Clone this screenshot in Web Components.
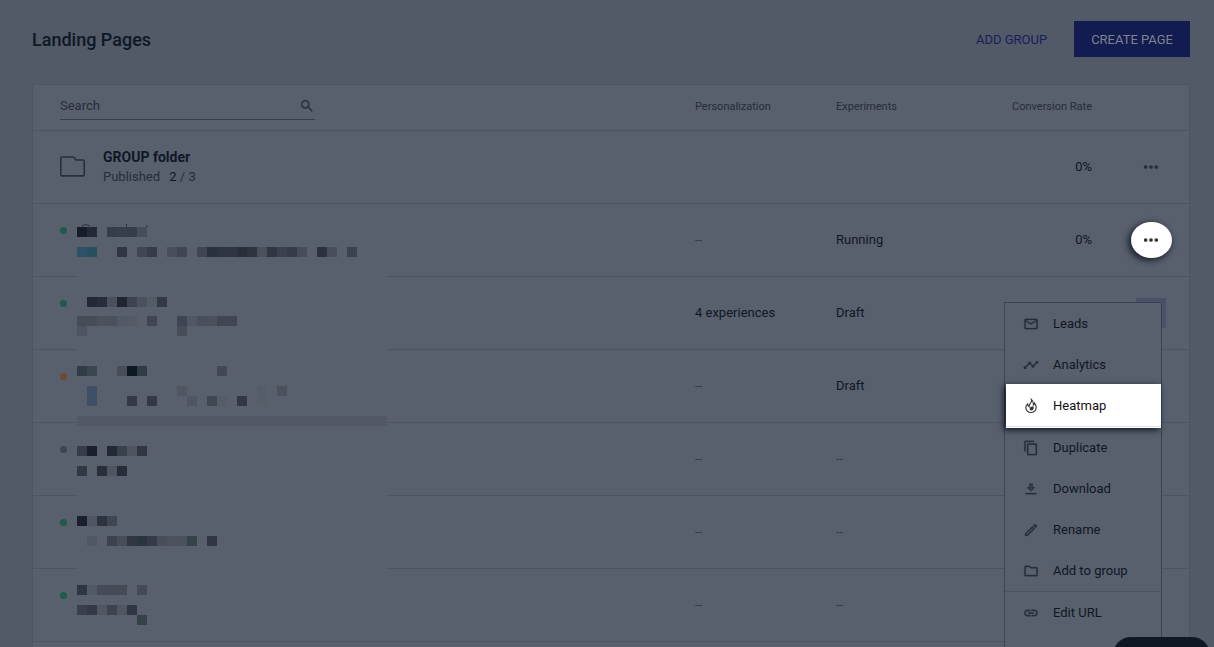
<!DOCTYPE html>
<html lang="en">
<head>
<meta charset="utf-8">
<title>Landing Pages</title>
<style>
  html { --page:#525967; --card:#585f6d; --line:#4d5463; --ink:#0e1825; --muted:#252e3b; --icon:#272f3c; }
  body { margin:0; background:var(--page); font-family:Roboto, "Liberation Sans", sans-serif; color:var(--ink); }
</style>
</head>
<body>
<lp-page></lp-page>
<script>
const ICONS = {
  search: '<path d="M15.5 14h-.79l-.28-.27A6.47 6.47 0 0 0 16 9.5 6.5 6.5 0 1 0 9.5 16c1.61 0 3.09-.59 4.23-1.57l.27.28v.79l5 4.99L20.49 19l-4.99-5zm-6 0C7.01 14 5 11.99 5 9.5S7.01 5 9.5 5 14 7.01 14 9.5 11.99 14 9.5 14z" stroke="currentColor" stroke-width=".6"/>',
  dots: '<circle cx="4" cy="12" r="2.800"/><circle cx="12" cy="12" r="2.800"/><circle cx="20" cy="12" r="2.800"/>',
  group: '<path d="M1.900 2.900h10.600a1.500 1.500 0 0 1 1.100.5l1.800 2.400h6.700a1.100 1.100 0 0 1 1.100 1.100v13a1.100 1.100 0 0 1-1.100 1.100H1.900a1.100 1.100 0 0 1-1.100-1.100V4a1.100 1.100 0 0 1 1.100-1.100z" fill="none" stroke="currentColor" stroke-width="1.500"/>',
  leads: '<path d="M22 6c0-1.100-.9-2-2-2H4c-1.100 0-2 .9-2 2v12c0 1.100.9 2 2 2h16c1.100 0 2-.9 2-2V6zm-2 0-8 5-8-5h16zm0 12H4V8l8 5 8-5v10z" stroke="currentColor" stroke-width=".4"/>',
  analytics: '<path d="M23 8c0 1.100-.9 2-2 2-.18 0-.35-.02-.51-.07l-3.560 3.550c.05.16.07.34.07.52 0 1.100-.9 2-2 2s-2-.9-2-2c0-.18.02-.36.07-.52l-2.550-2.550c-.16.05-.34.07-.52.07s-.36-.02-.52-.07l-4.550 4.560c.05.16.07.33.07.51 0 1.100-.9 2-2 2s-2-.9-2-2 .9-2 2-2c.18 0 .35.02.51.07l4.560-4.550C8.020 9.360 8 9.180 8 9c0-1.100.9-2 2-2s2 .9 2 2c0 .18-.02.36-.07.52l2.550 2.550c.16-.05.34-.07.52-.07s.36.02.52.07l3.550-3.560C19.020 8.350 19 8.180 19 8c0-1.100.9-2 2-2s2 .9 2 2z" stroke="currentColor" stroke-width=".4"/>',
  heatmap: '<path d="M12.600 2.200c.8 3-.4 4.700-2 6.600C9.300 10.400 8.900 11.800 9.300 13.300 7.700 12.500 6.900 10.900 6.900 8.900 5 10.600 4.200 12.400 4.200 14.300A7.800 7.600 0 0 0 12 21.800a7.800 7.600 0 0 0 7.800-7.500c0-2.600-.9-4.800-2.500-6.600-.2 1.500-.8 2.400-1.700 2.800C15.800 7.500 15 4.200 12.600 2.200z" fill="none" stroke="currentColor" stroke-width="1.700"/><path d="M15.800 12.200c-3 .2-5.900 1.500-5.900 4 0 1.500 1.100 2.500 2.500 2.500 3.100 0 4.200-3 3.400-6.500z"/>',
  duplicate: '<path d="M16 1H4c-1.100 0-2 .9-2 2v14h2V3h12V1zm3 4H8c-1.100 0-2 .9-2 2v14c0 1.100.9 2 2 2h11c1.100 0 2-.9 2-2V7c0-1.100-.9-2-2-2zm0 16H8V7h11v14z" stroke="currentColor" stroke-width=".4"/>',
  download: '<path d="M18 9.500h-3.500V4h-5v5.500H6l6 6 6-6zm-6.700 1.800V6h1.400v5.300h1.300L12 13.300l-2-2zM4 18h16v2H4z" stroke="currentColor" stroke-width=".4"/>',
  rename: '<path d="M14.060 9.020l.92.92L5.920 19H5v-.92l9.060-9.060M17.660 3c-.25 0-.51.1-.7.29l-1.830 1.830 3.750 3.750 1.830-1.830a1 1 0 0 0 0-1.410l-2.340-2.340c-.2-.2-.45-.29-.71-.29zm-3.600 3.190L3 17.250V21h3.750L17.810 9.940l-3.750-3.750z" stroke="currentColor" stroke-width=".4"/>',
  folder: '<path d="M9.170 6l2 2H20v10H4V6h5.170M10 4H4c-1.100 0-1.990.9-1.990 2L2 18c0 1.100.9 2 2 2h16c1.100 0 2-.9 2-2V8c0-1.100-.9-2-2-2h-8l-2-2z" stroke="currentColor" stroke-width=".4"/>',
  link: '<path d="M3.900 12c0-1.710 1.390-3.100 3.100-3.100h4V7H7a5 5 0 0 0 0 10h4v-1.900H7c-1.710 0-3.100-1.390-3.100-3.100zM8 13h8v-2H8v2zm9-6h-4v1.900h4a3.100 3.100 0 0 1 0 6.200h-4V17h4a5 5 0 0 0 0-10z" stroke="currentColor" stroke-width=".4"/>'
};

class LpIcon extends HTMLElement {
  connectedCallback() {
    this.attachShadow({ mode: 'open' }).innerHTML =
      `<style>:host{display:inline-block;width:16px;height:16px;flex:none}svg{display:block;width:100%;height:100%;fill:currentColor}</style>
       <svg viewBox="0 0 24 24" aria-hidden="true">${ICONS[this.getAttribute('name')]}</svg>`;
  }
}
customElements.define('lp-icon', LpIcon);

/* Redacted names. Each strip is "top height | column:colour ...", with columns 10px wide. */
const MASKS = {
  a: ['23 10|0:171c2a 1:222a36 3:343e4a 4:35404a 5:343e4a 6:474d5a',
      '43 10|0:2e5265 1:27505f 4:303643 6:404653 7:363c49 9:484e5b 10:404653 12:404653 13:28313d 14:2e3542 15:2f3542 16:262f3a 17:2e3440 18:4a505c 19:303643 20:3b414e 21:353b49 22:474d5a 24:2a333f 25:484e5b 27:3a434f'],
  b: ['20 10|1:232835 2:272d3a 3:4a535d 4:212532 5:3d4350 6:4b525d 7:515c66 8:333946',
      '39 10|0:474d58 1:474c59 2:4c525d 3:4b515c 4:505965 5:545b67 7:404653 10:3f4552 11:4f5964 12:484e5b 13:4b515c 14:404653 15:404653',
      '49 10|0:4e5461 10:484e59'],
  c: ['16 10|0:303c46 1:3b4650 4:484e59 5:0d1823 6:2f3b45 14:424855',
      '36 10|1:3f4f66 10:505662 18:525e69 20:4c525d',
      '46 10|1:3f4f66 5:333947 7:333947 11:4f5561 13:3e4853 14:565c69 16:323744 18:545f6a'],
  d: ['23 10|0:363d49 1:191f2d 3:232835 4:37424b 5:4e5561 6:303642',
      '43 10|0:303842 2:28303b 3:50555f 4:272c3a'],
  e: ['20 10|0:1a202e 1:505763 2:2b343f 3:404653',
      '40 10|1:505865 3:3c424f 4:464e59 5:303743 6:2a343f 7:353b49 8:484e5a 9:4c525e 10:4a505c 11:36424a 13:303643'],
  f: ['16 10|0:2f3643 1:505b66 2:454b58 3:444a57 4:454b57 6:444a56',
      '36 10|0:393f4c 1:333946 2:505662 3:3d4350 4:505662 5:303643',
      '46 10|6:36424a']
};
const EXTRAS = {
  a: '<path d="M5 22q4-3 8 0M49.500 20v3M69 22h2" fill="none" stroke="#2b3441"/>',
  c: '<path d="M0 66h310v7H0z" fill="#525865"/>',
  d: '<path d="M0 0h310v3H0z" fill="#525865"/>'
};
class LpMask extends HTMLElement {
  connectedCallback() {
    const key = this.getAttribute('kind');
    const rects = MASKS[key].map(strip => {
      const [box, cells] = strip.split('|');
      const [y, h] = box.split(' ');
      return cells.split(' ').map(cell => {
        const [col, colour] = cell.split(':');
        return `<rect x="${col * 10}" y="${y}" width="10" height="${h}" fill="#${colour}"/>`;
      }).join('');
    }).join('');
    const h = key === 'f' ? 72 : 73;
    this.attachShadow({ mode: 'open' }).innerHTML =
      `<style>:host{display:block;height:73px}svg{display:block;background:var(--card)}rect{shape-rendering:crispEdges}</style>
       <svg width="310" height="${h}" role="img" aria-label="Hidden name">${rects}${EXTRAS[key] || ''}</svg>`;
  }
}
customElements.define('lp-mask', LpMask);

class LpMenuItem extends HTMLElement {
  connectedCallback() {
    this.attachShadow({ mode: 'open' }).innerHTML = `
      <style>
        :host{display:block;position:relative}
        :host([divided]){border-bottom:1px solid var(--line)}
        button{all:unset;box-sizing:border-box;position:relative;display:flex;align-items:center;gap:14px;width:100%;height:41px;padding:0 18px;
          font-size:13px;line-height:16px;white-space:nowrap;cursor:pointer}
        lp-icon{color:var(--icon)}
        :host([active]){border-color:transparent;color:#111;z-index:1}
        :host([active]) lp-icon{color:#333}
        :host([active])::before{content:"";position:absolute;inset:-1px 0 -2px 1px;background:linear-gradient(#dfe5e6,#dfe5e6) 0 42px/100% 1px no-repeat #fff;
          box-shadow:-2px 2px 6px 0 #0d1420}
      </style>
      <button type="button" role="menuitem"><lp-icon name="${this.getAttribute('icon')}"></lp-icon><span><slot></slot></span></button>`;
  }
}
customElements.define('lp-menu-item', LpMenuItem);

class LpMenu extends HTMLElement {
  connectedCallback() {
    this.attachShadow({ mode: 'open' }).innerHTML = `
      <style>:host{display:block;box-sizing:border-box;width:158px;padding-bottom:40px;background:var(--card);border:1px solid #3b4250;text-align:left}</style>
      <div role="menu"><slot></slot></div>`;
  }
}
customElements.define('lp-menu', LpMenu);

class LpHeader extends HTMLElement {
  connectedCallback() {
    this.attachShadow({ mode: 'open' }).innerHTML = `
      <style>
        :host{display:flex;align-items:center;justify-content:space-between;height:36px}
        h1{margin:0;padding-top:2px;font-size:18px;line-height:24px;font-weight:500}
        div{display:flex;gap:10px}
        button{height:36px;border:0;padding:2px 17px 0;font:13px/16px Roboto,"Liberation Sans",sans-serif;text-transform:uppercase;background:none;color:#151f5c}
        .primary{background:#131c50;color:#7d828c}
      </style>
      <h1><slot></slot></h1>
      <div><button type="button">Add group</button><button type="button" class="primary">Create page</button></div>`;
  }
}
customElements.define('lp-header', LpHeader);

const ROWS = [
  { mask:'a', dot:'#215a4c', pers:'--', exp:'Running', rate:'0%', spot:true },
  { mask:'b', dot:'#215a4c', pers:'4 experiences', exp:'Draft', open:true },
  { mask:'c', dot:'#6f4a2c', pers:'--', exp:'Draft' },
  { mask:'d', dot:'#3a4653', pers:'--', exp:'--' },
  { mask:'e', dot:'#215a4c', pers:'--', exp:'--' },
  { mask:'f', dot:'#215a4c', pers:'--', exp:'--' }
];
const MENU = `
  <lp-menu>
    <lp-menu-item icon="leads">Leads</lp-menu-item>
    <lp-menu-item icon="analytics">Analytics</lp-menu-item>
    <lp-menu-item icon="heatmap" divided active>Heatmap</lp-menu-item>
    <lp-menu-item icon="duplicate">Duplicate</lp-menu-item>
    <lp-menu-item icon="download">Download</lp-menu-item>
    <lp-menu-item icon="rename">Rename</lp-menu-item>
    <lp-menu-item icon="folder" divided>Add to group</lp-menu-item>
    <lp-menu-item icon="link">Edit URL</lp-menu-item>
  </lp-menu>`;
const value = t => t === '--' ? '<span class="none">--</span>' : t;

class LpTable extends HTMLElement {
  connectedCallback() {
    const rows = ROWS.map(r => `
      <tr>
        <td class="first"><div class="name"><i style="background:${r.dot}"></i><lp-mask kind="${r.mask}"></lp-mask></div></td>
        <td>${value(r.pers)}</td><td>${value(r.exp)}</td><td class="rate">${r.rate || ''}</td>
        <td class="act">${r.spot ? '<button type="button" class="spot" aria-label="More"><lp-icon name="dots"></lp-icon></button>' : ''}${r.open ? '<button type="button" class="open" aria-label="More"></button>' + MENU : ''}</td>
      </tr>`).join('');
    this.attachShadow({ mode: 'open' }).innerHTML = `
      <style>
        :host{display:block;background:var(--card);border:1px solid var(--line)}
        table{width:100%;table-layout:fixed;border-collapse:separate;border-spacing:0;font-size:13px;line-height:16px}
        td,th{box-sizing:border-box;padding:0 0 2px;height:73px;text-align:left;vertical-align:middle;background:linear-gradient(var(--line),var(--line)) bottom/100% 1px no-repeat}
        td.first{padding:0}
        th{height:46px;font-size:11px;font-weight:400;color:var(--muted)}
        .p{width:141px}.e,.r{width:128px}.a{width:97px}
        .rate{text-align:right}
        .search{display:flex;align-items:center;box-sizing:border-box;width:255px;height:26px;margin-left:27px;padding-bottom:1px;border-bottom:1px solid #373f4c}
        th:first-child{padding-bottom:0;vertical-align:bottom}
        .search{margin-bottom:11px}
        input{flex:1;min-width:0;border:0;padding:0;background:none;font:13px/16px Roboto,"Liberation Sans",sans-serif;color:var(--muted);outline:0}
        input::placeholder{color:var(--muted);opacity:1}
        .search lp-icon{color:#2d3643}
        .group,.name{display:flex;align-items:center;padding-left:27px}
        .group{gap:18px}
        .group lp-icon{width:25px;height:25px;color:var(--icon)}
        strong{display:block;font-size:14px;line-height:20px;font-weight:700}
        .group p{margin:0;line-height:20px;color:var(--muted)}
        .group b{font-weight:400;color:var(--ink);margin-left:6px}
        .name{gap:10px}
        .name i{width:7px;height:7px;border-radius:4px;margin-bottom:20px}
        .none{color:#343c4a}
        .act{position:relative;text-align:center}
        .act button{border:0;background:none;padding:0;color:var(--icon);width:41px;height:36px;display:inline-flex;align-items:center;justify-content:center;vertical-align:middle;margin-left:21px}
        .act .spot{background:#fff;border-radius:50%;color:#333;box-shadow:-2px 2px 6px 1px #1b2230}
        .act .open{width:30px;height:30px;background:#49526a}
        lp-menu{position:absolute;top:25px;right:27px;z-index:2}
      </style>
      <table>
        <thead><tr>
          <th><label class="search"><input type="search" placeholder="Search" aria-label="Search"><lp-icon name="search"></lp-icon></label></th>
          <th class="p">Personalization</th><th class="e">Experiments</th><th class="r rate">Conversion Rate</th><th class="a"></th>
        </tr></thead>
        <tbody>
          <tr>
            <td><div class="group"><lp-icon name="group"></lp-icon><div><strong>GROUP folder</strong><p>Published <b>2</b> / 3</p></div></div></td>
            <td></td><td></td><td class="rate">0%</td>
            <td class="act"><button type="button" aria-label="More"><lp-icon name="dots"></lp-icon></button></td>
          </tr>
          ${rows}
          <tr><td></td><td></td><td></td><td></td><td></td></tr>
        </tbody>
      </table>`;
  }
}
customElements.define('lp-table', LpTable);

class LpPage extends HTMLElement {
  connectedCallback() {
    this.attachShadow({ mode: 'open' }).innerHTML = `
      <style>
        :host{display:block;box-sizing:border-box;height:100vh;overflow:hidden;padding:21px 24px 0 32px}
        lp-table{margin-top:27px}
        .chat{position:fixed;right:4px;bottom:-30px;width:97px;height:40px;border:0;border-radius:18px;background:#0f1824;z-index:3}
      </style>
      <lp-header>Landing Pages</lp-header>
      <lp-table></lp-table>
      <button class="chat" type="button" aria-label="Help"></button>`;
  }
}
customElements.define('lp-page', LpPage);
</script>
</body>
</html>
